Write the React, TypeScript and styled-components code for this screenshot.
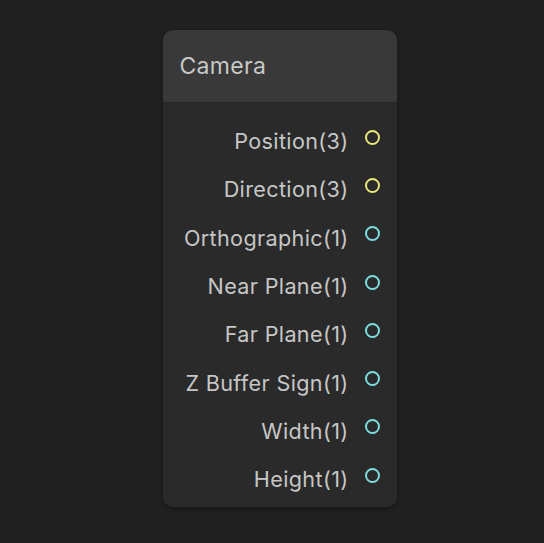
import React from "react";
import styled, { createGlobalStyle } from "styled-components";

const Global = createGlobalStyle`
  html, body { margin: 0; padding: 0; background: #202020; }
  body { width: 544px; height: 543px; overflow: hidden; font-family: Inter, "Noto Sans", sans-serif; }
`;

const Page = styled.div`
  width: 544px;
  height: 543px;
  display: flex;
  justify-content: center;
  padding-top: 30px;
  box-sizing: border-box;
`;

const Node = styled.div`
  width: 234px;
  height: 477px;
  margin-left: 15px;
  background: #2a2a2a;
  border-radius: 10px;
  box-shadow: 0 0 0 1px #1b1b1b, 0 2px 4px rgba(0,0,0,0.35);
  overflow: hidden;
  display: flex;
  flex-direction: column;
`;

const Header = styled.div`
  height: 73px;
  background: #393939;
  border-bottom: 1px solid #252525;
  display: flex;
  align-items: center;
  padding-left: 17px;
  font-size: 23px;
  letter-spacing: 0.3px;
  color: #c8c8c8;
  box-sizing: border-box;
`;

const Body = styled.div`
  display: flex;
  flex-direction: column;
  padding-top: 14px;
`;

const Row = styled.div`
  height: 48.3px;
  display: flex;
  align-items: center;
  justify-content: flex-end;
  padding-right: 17px;
  gap: 16px;
`;

const Label = styled.span`
  font-size: 21.6px;
  letter-spacing: 0.35px;
  color: #c6c6c6;
`;

const Port = styled.span<{ $color: string }>`
  width: 15px;
  height: 15px;
  box-sizing: border-box;
  border-radius: 50%;
  border: 2px solid ${(p) => p.$color};
  margin-top: -8px;
`;

const YELLOW = "#e8e87a";
const CYAN = "#7ddcdf";

const ports = [
  { name: "Position(3)", color: YELLOW },
  { name: "Direction(3)", color: YELLOW },
  { name: "Orthographic(1)", color: CYAN },
  { name: "Near Plane(1)", color: CYAN },
  { name: "Far Plane(1)", color: CYAN },
  { name: "Z Buffer Sign(1)", color: CYAN },
  { name: "Width(1)", color: CYAN },
  { name: "Height(1)", color: CYAN },
];

export default function App() {
  return (
    <>
      <Global />
      <Page>
        <Node>
          <Header>Camera</Header>
          <Body>
            {ports.map((p) => (
              <Row key={p.name}>
                <Label>{p.name}</Label>
                <Port $color={p.color} />
              </Row>
            ))}
          </Body>
        </Node>
      </Page>
    </>
  );
}
